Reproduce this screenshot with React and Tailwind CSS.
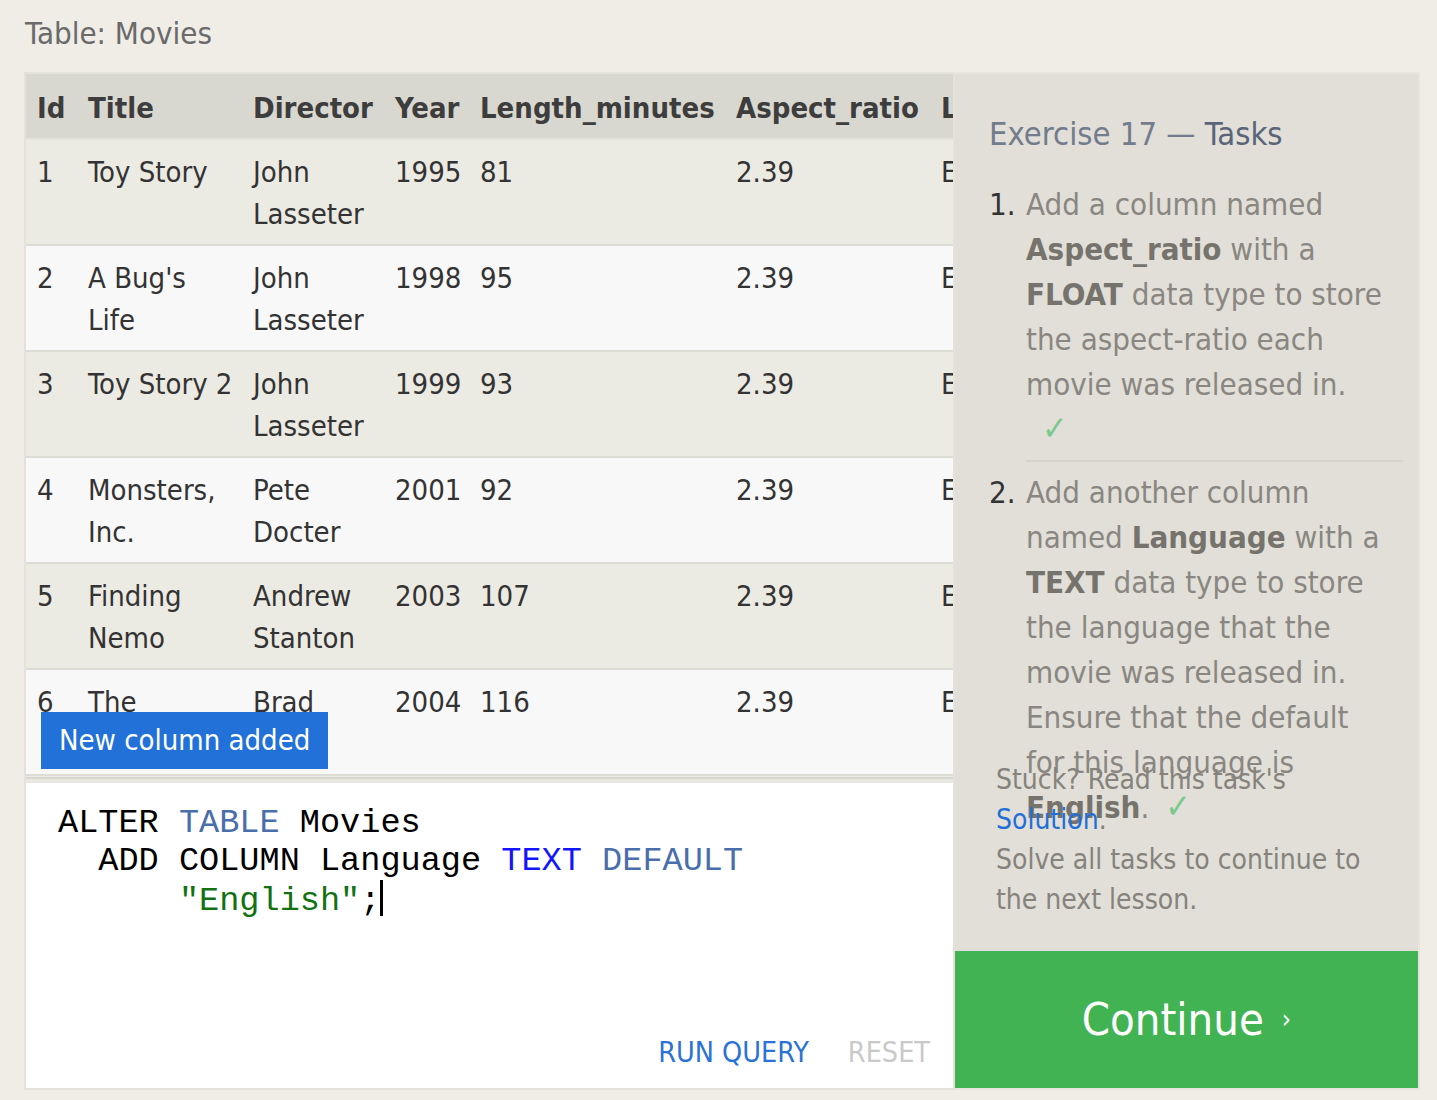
import React from "react";

const MOVIES = [
  { id: 1, title: "Toy Story", director: "John\nLasseter", year: 1995, length: 81 },
  { id: 2, title: "A Bug's\nLife", director: "John\nLasseter", year: 1998, length: 95 },
  { id: 3, title: "Toy Story 2", director: "John\nLasseter", year: 1999, length: 93 },
  { id: 4, title: "Monsters,\nInc.", director: "Pete\nDocter", year: 2001, length: 92 },
  { id: 5, title: "Finding\nNemo", director: "Andrew\nStanton", year: 2003, length: 107 },
  { id: 6, title: "The\nIncredibles", director: "Brad\nBird", year: 2004, length: 116 },
  { id: 7, title: "Cars", director: "John\nLasseter", year: 2006, length: 117 },
];

const HEADERS = ["Id", "Title", "Director", "Year", "Length_minutes", "Aspect_ratio", "Language"];

function Check() {
  return <span className="inline-block ml-[16px] pr-[10px] font-bold text-[#7bc98c] text-[34px] leading-none">✓</span>;
}

function Task({ num, children, last }) {
  return (
    <div className="flex">
      <div className="w-[37px] shrink-0 text-[#333333]">{num}.</div>
      <div className={`flex-1 ${last ? "" : "pb-[8px] border-b-2 border-[#d6d4cb] mb-[8px]"}`}>
        <div className="pr-[12px]">{children}</div>
      </div>
    </div>
  );
}

export default function App() {
  return (
    <div className="min-h-screen bg-[#efede6] font-['DejaVu_Sans_Condensed','DejaVu_Sans',sans-serif] pl-[24px] pr-[17px] pt-[16px]">
      <h2 className="text-[31px] leading-[34px] text-[#6a6a6a] pl-[1px]">Table: Movies</h2>

      <div className="flex mt-[22px] h-[1018px]">
        {/* Left: table + editor */}
        <div className="w-[931px] shrink-0 border-2 border-[#e4e2db] flex flex-col">
          <div className="relative h-[705px] overflow-hidden border-b-2 border-[#d7d6cf]">
            <table className="table-fixed w-[1084px] border-collapse text-[29px] text-[#333333]">
              <colgroup>
                <col className="w-[51px]" />
                <col className="w-[165px]" />
                <col className="w-[142px]" />
                <col className="w-[85px]" />
                <col className="w-[256px]" />
                <col className="w-[205px]" />
                <col className="w-[180px]" />
              </colgroup>
              <thead>
                <tr className="bg-[#d9d8d0] border-b-2 border-[#e3e2db]">
                  {HEADERS.map((h) => (
                    <th key={h} className="text-left font-bold text-[#3d3d3d] px-[11px] pt-[13px] pb-[9px] leading-[42px] whitespace-nowrap">
                      {h}
                    </th>
                  ))}
                </tr>
              </thead>
              <tbody>
                {MOVIES.map((m, i) => (
                  <tr
                    key={m.id}
                    className={`${i % 2 === 0 ? "bg-[#ebeae3]" : "bg-[#f8f8f8]"} border-b-2 border-[#dddcd5]`}
                  >
                    <td className="align-top px-[11px] pt-[11px] pb-[9px] leading-[42px]">{m.id}</td>
                    <td className="align-top px-[11px] pt-[11px] pb-[9px] leading-[42px] whitespace-pre">{m.title}</td>
                    <td className="align-top px-[11px] pt-[11px] pb-[9px] leading-[42px] whitespace-pre">{m.director}</td>
                    <td className="align-top px-[11px] pt-[11px] pb-[9px] leading-[42px]">{m.year}</td>
                    <td className="align-top px-[11px] pt-[11px] pb-[9px] leading-[42px]">{m.length}</td>
                    <td className="align-top px-[11px] pt-[11px] pb-[9px] leading-[42px]">2.39</td>
                    <td className="align-top px-[11px] pt-[11px] pb-[9px] leading-[42px]">English</td>
                  </tr>
                ))}
              </tbody>
            </table>

            <div className="absolute left-[15px] bottom-[8px] bg-[#2171d9] text-white text-[29px] leading-[57px] px-[18px]">
              New column added
            </div>
          </div>

          {/* Editor */}
          <div className="flex-1 bg-white border-t-4 border-[#e8e7e0] flex flex-col">
            <pre className="flex-1 pt-[21px] pl-[32px] font-['Liberation_Mono','Courier_New',monospace] text-[33.6px] leading-[38px] text-black">
              {"ALTER "}
              <span className="text-[#4a6eab]">TABLE</span>
              {" Movies\n  ADD COLUMN Language "}
              <span className="text-[#1414ff]">TEXT</span> <span className="text-[#4a6eab]">DEFAULT</span>
              {"\n      "}
              <span className="text-[#127212]">"English"</span>
              {";"}
              <span className="inline-block w-[3px] h-[36px] bg-black align-[-6px]" />
            </pre>
            <div className="flex justify-end gap-[39px] pr-[23px] pb-[15px] text-[28.5px] leading-[40px]">
              <button className="text-[#2a72d6]">RUN QUERY</button>
              <button className="text-[#c9c9c9]">RESET</button>
            </div>
          </div>
        </div>

        {/* Right: tasks */}
        <div className="relative flex-1 bg-[#e1dfd8] border-2 border-l-0 border-[#e7e5de]">
          <div className="pt-[40px] pl-[34px] pr-[15px]">
            <h3 className="text-[32.5px] leading-[40px] text-[#727c8c]">
              Exercise 17 — <span className="text-[#5a6579]">Tasks</span>
            </h3>
            <div className="mt-[28px] text-[31px] leading-[45px] text-[#8a8681]">
              <Task num={1}>
                Add a column named <b className="text-[#76736d]">Aspect_ratio</b> with a{" "}
                <b className="text-[#76736d]">FLOAT</b> data type to store the aspect-ratio each movie was released in.
                <Check />
              </Task>
              <Task num={2} last>
                Add another column named <b className="text-[#76736d]">Language</b> with a{" "}
                <b className="text-[#76736d]">TEXT</b> data type to store the language that the movie was released in.
                Ensure that the default for this language is <b className="text-[#76736d]">English</b>.
                <Check />
              </Task>
            </div>
          </div>

          <div className="absolute left-0 right-0 bottom-0">
            <div className="pl-[41px] pr-[40px] text-[28px] leading-[40px] text-[#86827c] mb-[31px]">
              <p>
                Stuck? Read this task's <a className="text-[#1f6fd6]">Solution</a>.
              </p>
              <p>Solve all tasks to continue to the next lesson.</p>
            </div>
            <button className="w-full h-[137px] bg-[#41b353] text-white text-[45px] flex items-center justify-center">
              Continue <span className="ml-[18px] text-[26px]">›</span>
            </button>
          </div>
        </div>
      </div>
    </div>
  );
}
